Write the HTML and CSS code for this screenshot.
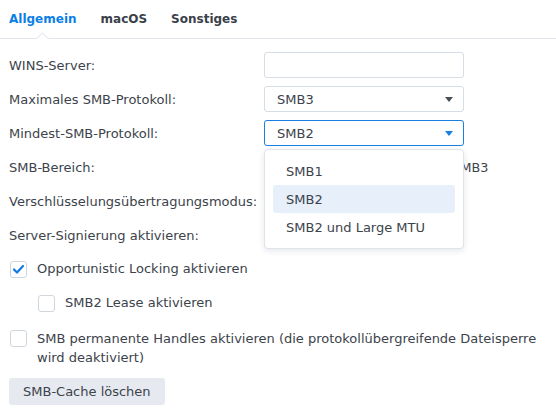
FILE: index.html
```html
<!DOCTYPE html>
<html lang="de">
<head>
<meta charset="utf-8">
<link rel="stylesheet" href="styles.css">
</head>
<body>
<div class="tabs">
  <div class="tab active">Allgemein</div>
  <div class="tab">macOS</div>
  <div class="tab">Sonstiges</div>
</div>
<div class="form">
  <div class="grid">
    <div class="label">WINS-Server:</div>
    <div class="input"></div>

    <div class="label">Maximales SMB-Protokoll:</div>
    <div class="select"><span>SMB3</span><span class="arrow"></span></div>

    <div class="label">Mindest-SMB-Protokoll:</div>
    <div class="select focus"><span>SMB2</span><span class="arrow"></span>
      <div class="menu">
        <div class="item">SMB1</div>
        <div class="item selected">SMB2</div>
        <div class="item">SMB2 und Large MTU</div>
      </div>
    </div>

    <div class="label">SMB-Bereich:</div>
    <div class="value">SMB2, SMB2 und Large MTU, SMB3</div>

    <div class="label">Verschlüsselungsübertragungsmodus:</div>
    <div class="select"><span class="arrow"></span></div>

    <div class="label">Server-Signierung aktivieren:</div>
    <div class="select"><span class="arrow"></span></div>
  </div>

  <div class="check first">
    <span class="box"><svg width="15" height="15" viewBox="0 0 15 15"><polyline points="3,7.5 6,10.5 12,4" fill="none" stroke="#0f7ae5" stroke-width="2.2" stroke-linecap="round" stroke-linejoin="round"/></svg></span>
    <span class="text">Opportunistic Locking aktivieren</span>
  </div>
  <div class="check sub">
    <span class="box"></span>
    <span class="text">SMB2 Lease aktivieren</span>
  </div>
  <div class="check multi">
    <span class="box"></span>
    <span class="text">SMB permanente Handles aktivieren (die protokollübergreifende Dateisperre wird deaktiviert)</span>
  </div>
  <button class="btn">SMB-Cache löschen</button>
</div>
</body>
</html>
```

FILE: styles.css
```css
html, body {
  margin: 0;
  padding: 0;
  background: #ffffff;
}
body {
  font-family: "DejaVu Sans", Verdana, sans-serif;
  font-size: 13px;
  color: #3c434b;
  width: 556px;
  height: 417px;
  overflow: hidden;
}
.tabs {
  display: flex;
  box-sizing: border-box;
  height: 39px;
  border-bottom: 1px solid #e2e6eb;
  padding-left: 9px;
  gap: 24px;
}
.tab {
  display: flex;
  align-items: center;
  font-size: 12px;
  font-weight: bold;
  color: #3a4149;
  position: relative;
}
.tab.active {
  color: #0b7fe6;
}
.tab.active::after {
  content: "";
  position: absolute;
  left: 50%;
  bottom: -5px;
  width: 9px;
  height: 9px;
  margin-left: -4.5px;
  background: #ffffff;
  border-left: 1px solid #e2e6eb;
  border-top: 1px solid #e2e6eb;
  box-sizing: border-box;
  transform: rotate(45deg);
}
.form {
  padding: 13px 0 0 9px;
}
.grid {
  display: grid;
  grid-template-columns: 255px 200px;
  grid-auto-rows: 26px;
  row-gap: 8px;
  align-items: center;
}
.label {
  white-space: nowrap;
}
.input, .select {
  box-sizing: border-box;
  height: 26px;
  border: 1px solid #d6dde5;
  border-radius: 3px;
  background: #fff;
}
.select {
  display: flex;
  align-items: center;
  padding: 0 10px 0 12px;
  position: relative;
}
.select .arrow {
  margin-left: auto;
  width: 0;
  height: 0;
  border-left: 4.5px solid transparent;
  border-right: 4.5px solid transparent;
  border-top: 5px solid #4a4f55;
}
.select.focus {
  border-color: #1a7fe4;
}
.select.focus .arrow {
  border-top-color: #1a7fe4;
}
.value {
  white-space: nowrap;
  overflow: visible;
  font-size: 12.75px;
}
.menu {
  position: absolute;
  top: 28px;
  left: -1px;
  width: 200px;
  box-sizing: border-box;
  border: 1px solid #dfe4ea;
  border-radius: 4px;
  background: #fff;
  padding: 7px 8px;
  box-shadow: 0 2px 6px rgba(40, 60, 90, 0.12);
  z-index: 5;
}
.item {
  height: 28px;
  line-height: 29px;
  padding-left: 13px;
  border-radius: 3px;
  white-space: nowrap;
}
.item.selected {
  background: #e6effa;
}
.check {
  display: flex;
  align-items: center;
  gap: 10px;
  line-height: 20px;
  padding-left: 1px;
}
.check.first {
  margin-top: 11px;
}
.check.sub {
  margin-top: 14px;
  padding-left: 29px;
}
.check.multi {
  margin-top: 16px;
  align-items: flex-start;
  line-height: 19px;
  padding-right: 10px;
}
.check.multi .box {
  margin-top: 1px;
}
.box {
  flex: none;
  box-sizing: border-box;
  width: 17px;
  height: 17px;
  border: 1px solid #cfd6de;
  border-radius: 3px;
  background: #fff;
  display: flex;
  align-items: center;
  justify-content: center;
}
.btn {
  margin-top: 11px;
  height: 27px;
  padding: 0 14px;
  border: none;
  border-radius: 3px;
  background: #e6eaf0;
  font-family: inherit;
  font-size: 13px;
  color: #3c434b;
}
```
